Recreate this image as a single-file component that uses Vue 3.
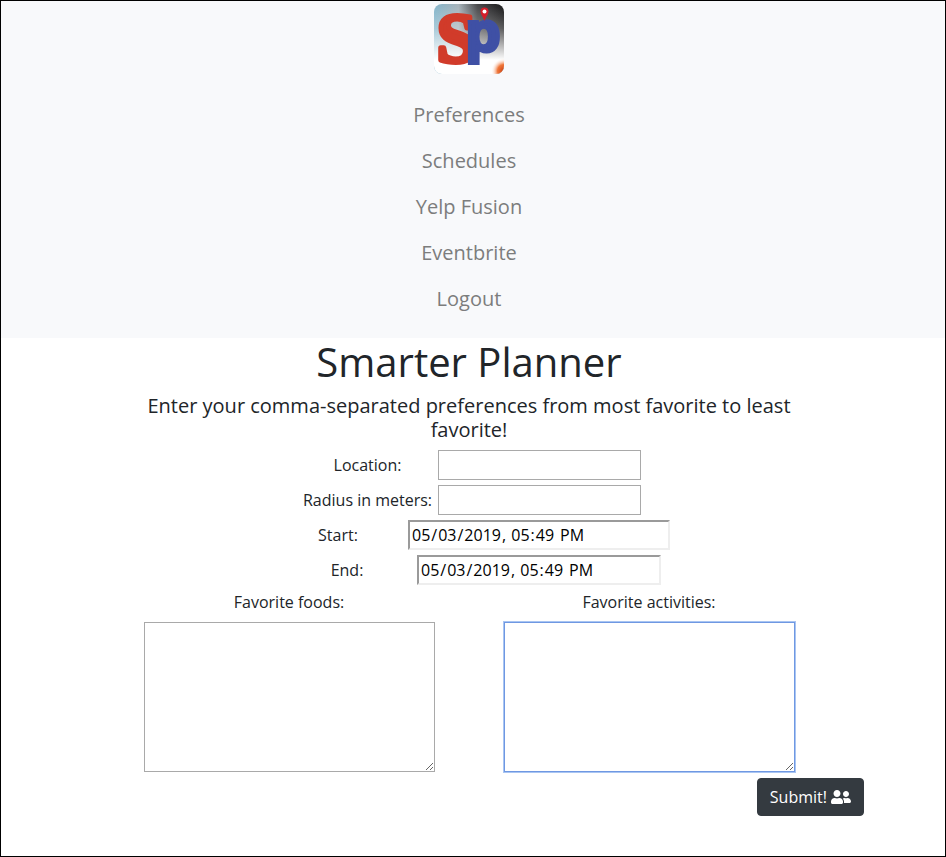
<script setup>
import { ref } from 'vue'

const links = ['Preferences', 'Schedules', 'Yelp Fusion', 'Eventbrite', 'Logout']

const location = ref('')
const radius = ref('')
const start = ref('2019-05-03T17:49')
const end = ref('2019-05-03T17:49')
const foods = ref('')
const activities = ref('')
</script>

<template>
  <div class="page">
    <nav class="nav">
      <a class="brand" href="#" aria-label="Smarter Planner home">
        <svg class="logo" viewBox="0 0 70 70" aria-hidden="true">
          <defs>
            <clipPath id="tile"><rect width="70" height="70" rx="8" /></clipPath>
            <linearGradient id="sky" x1="0" y1="0" x2="1" y2="0">
              <stop offset="0" stop-color="#82b4ca" />
              <stop offset=".35" stop-color="#a5b2b9" />
              <stop offset=".62" stop-color="#48484a" />
              <stop offset="1" stop-color="#151517" />
            </linearGradient>
            <linearGradient id="fade" x1=".4" y1="0" x2=".4" y2="1">
              <stop offset="0" stop-color="#fff" stop-opacity="0" />
              <stop offset=".35" stop-color="#fff" stop-opacity=".3" />
              <stop offset=".8" stop-color="#fff" />
            </linearGradient>
            <radialGradient id="flame" cx="70" cy="67" r="13" gradientUnits="userSpaceOnUse">
              <stop offset="0" stop-color="#c93c0c" />
              <stop offset=".5" stop-color="#f0783c" />
              <stop offset="1" stop-color="#fff" stop-opacity="0" />
            </radialGradient>
          </defs>
          <g clip-path="url(#tile)">
            <rect width="70" height="70" fill="url(#sky)" />
            <rect width="70" height="70" fill="url(#fade)" />
            <rect x="55" y="50" width="15" height="20" fill="url(#flame)" />
            <text class="letter-s" x="3" y="58">S</text>
            <text class="letter-p" x="32" y="47">p</text>
            <path d="M50.500 17C49 12.500 46.500 10.500 46.500 7.500a4 4 0 0 1 8 0C54.500 10.500 52 12.500 50.500 17z" fill="#d31e2a" />
            <circle cx="50.500" cy="7.500" r="2" fill="#fff" />
          </g>
        </svg>
      </a>
      <ul class="links">
        <li v-for="link in links" :key="link"><a href="#">{{ link }}</a></li>
      </ul>
    </nav>

    <main class="main">
      <h1>Smarter Planner</h1>
      <h2>Enter your comma-separated preferences from most favorite to least favorite!</h2>
      <form @submit.prevent>
        <div class="rows">
          <div class="row">
            <label for="location">Location:</label>
            <input id="location" v-model="location" class="plain" type="text" />
          </div>
          <div class="row">
            <label for="radius">Radius in meters:</label>
            <input id="radius" v-model="radius" class="plain" type="text" />
          </div>
          <div class="row">
            <label for="start">Start:</label>
            <input id="start" v-model="start" class="date start" type="datetime-local" />
          </div>
          <div class="row">
            <label for="end">End:</label>
            <input id="end" v-model="end" class="date end" type="datetime-local" />
          </div>
        </div>
        <div class="columns">
          <div class="column">
            <label for="foods">Favorite foods:</label>
            <textarea id="foods" v-model="foods"></textarea>
          </div>
          <div class="column">
            <label for="activities">Favorite activities:</label>
            <textarea id="activities" v-model="activities" class="active"></textarea>
          </div>
        </div>
        <div class="actions">
          <button type="submit">
            Submit!
            <svg viewBox="0 0 640 512" aria-hidden="true">
              <path fill="currentColor" d="M192 256c61.9 0 112-50.1 112-112S253.9 32 192 32 80 82.1 80 144s50.1 112 112 112zm76.8 32h-8.3c-20.8 10-43.9 16-68.500 16s-47.600-6-68.500-16h-8.300C51.600 288 0 339.600 0 403.200V432c0 26.500 21.500 48 48 48h288c26.500 0 48-21.500 48-48v-28.800c0-63.600-51.600-115.200-115.200-115.200zM480 256c53 0 96-43 96-96s-43-96-96-96-96 43-96 96 43 96 96 96zm48 32h-3.800c-13.900 4.800-28.600 8-44.200 8s-30.300-3.200-44.200-8H432c-20.400 0-39.200 5.900-55.700 15.400 24.400 26.300 39.700 61.200 39.700 99.800v38.400c0 2.200-.5 4.300-.6 6.400H592c26.500 0 48-21.500 48-48 0-61.900-50.100-112-112-112z" />
            </svg>
          </button>
        </div>
      </form>
    </main>
  </div>
</template>

<style>
body {
  margin: 0;
  background: #fff;
}
</style>

<style scoped>
*,
*::before,
*::after {
  box-sizing: border-box;
}

.page {
  min-height: 100vh;
  border: 1px solid #000;
  font-family: "Open Sans", "Noto Sans", sans-serif;
  font-size: 16px;
  line-height: 24px;
  color: #212529;
  text-align: center;
}

.nav {
  display: flex;
  flex-direction: column;
  align-items: center;
  gap: 18px;
  padding: 3px 8px 16px 0;
  background: #f8f9fb;
}

.brand,
.logo {
  display: block;
}

.logo {
  width: 70px;
  height: 70px;
}

.letter-s {
  font: bold 70px "Liberation Serif", serif;
  fill: #d13b2a;
  stroke: #d13b2a;
  stroke-width: 5px;
  stroke-linejoin: round;
}

.letter-p {
  font: bold 56px "Liberation Sans", sans-serif;
  fill: #3f50a5;
  stroke: #3f50a5;
  stroke-width: 4px;
}

.links {
  margin: 0;
  padding: 0;
  list-style: none;
}

.links a {
  display: block;
  padding: 8px 0;
  font-size: 20px;
  line-height: 30px;
  color: #7c7d7d;
  text-decoration: none;
}

.main {
  padding-right: 8px;
}

h1,
h2 {
  margin: 0 auto 8px;
  font-weight: 400;
}

h1 {
  font-size: 40px;
  line-height: 48px;
}

h2 {
  max-width: 720px;
  font-size: 20px;
  line-height: 24px;
}

.rows {
  display: grid;
  gap: 5px;
  padding-left: 2px;
}

.row {
  display: flex;
  justify-content: center;
  align-items: center;
  gap: 2px;
}

.row label {
  width: 136px;
}

input,
textarea,
button {
  margin: 0;
  font: inherit;
}

input {
  height: 30px;
  padding: 1px 2px;
  color: #000;
  background: #fff;
  border-radius: 0;
  outline: none;
}

.plain {
  width: 203px;
  border: 1px solid #a9a9a9;
}

.date {
  padding: 1px;
  border: 2px solid;
  border-color: #9a9a9a #eee #eee #9a9a9a;
}

.date::-webkit-calendar-picker-indicator {
  display: none;
}

.date::-webkit-datetime-edit-ampm-field {
  margin-left: 2px;
}

.start {
  width: 262px;
}

.end {
  width: 244px;
}

.columns {
  display: grid;
  grid-template-columns: 1fr 1fr;
  max-width: 720px;
  margin: 5px auto 0;
}

.column {
  display: flex;
  flex-direction: column;
  align-items: center;
  gap: 8px;
}

textarea {
  width: 291px;
  max-width: 100%;
  height: 150px;
  padding: 2px;
  border: 1px solid #a9a9a9;
  border-radius: 0;
  background: #fff;
  outline: none;
  resize: both;
}

.active {
  border-color: #6f98e2;
  box-shadow: 0 0 0 1px #a9c5f2;
}

.actions {
  display: flex;
  justify-content: flex-end;
  max-width: 790px;
  margin: 6px auto 0;
}

button {
  display: flex;
  align-items: center;
  gap: 4px;
  padding: 6px 12px;
  border: 1px solid #343a40;
  border-radius: 4px;
  background: #343a40;
  color: #fff;
  cursor: pointer;
}

button svg {
  width: 20px;
  height: 16px;
}
</style>
